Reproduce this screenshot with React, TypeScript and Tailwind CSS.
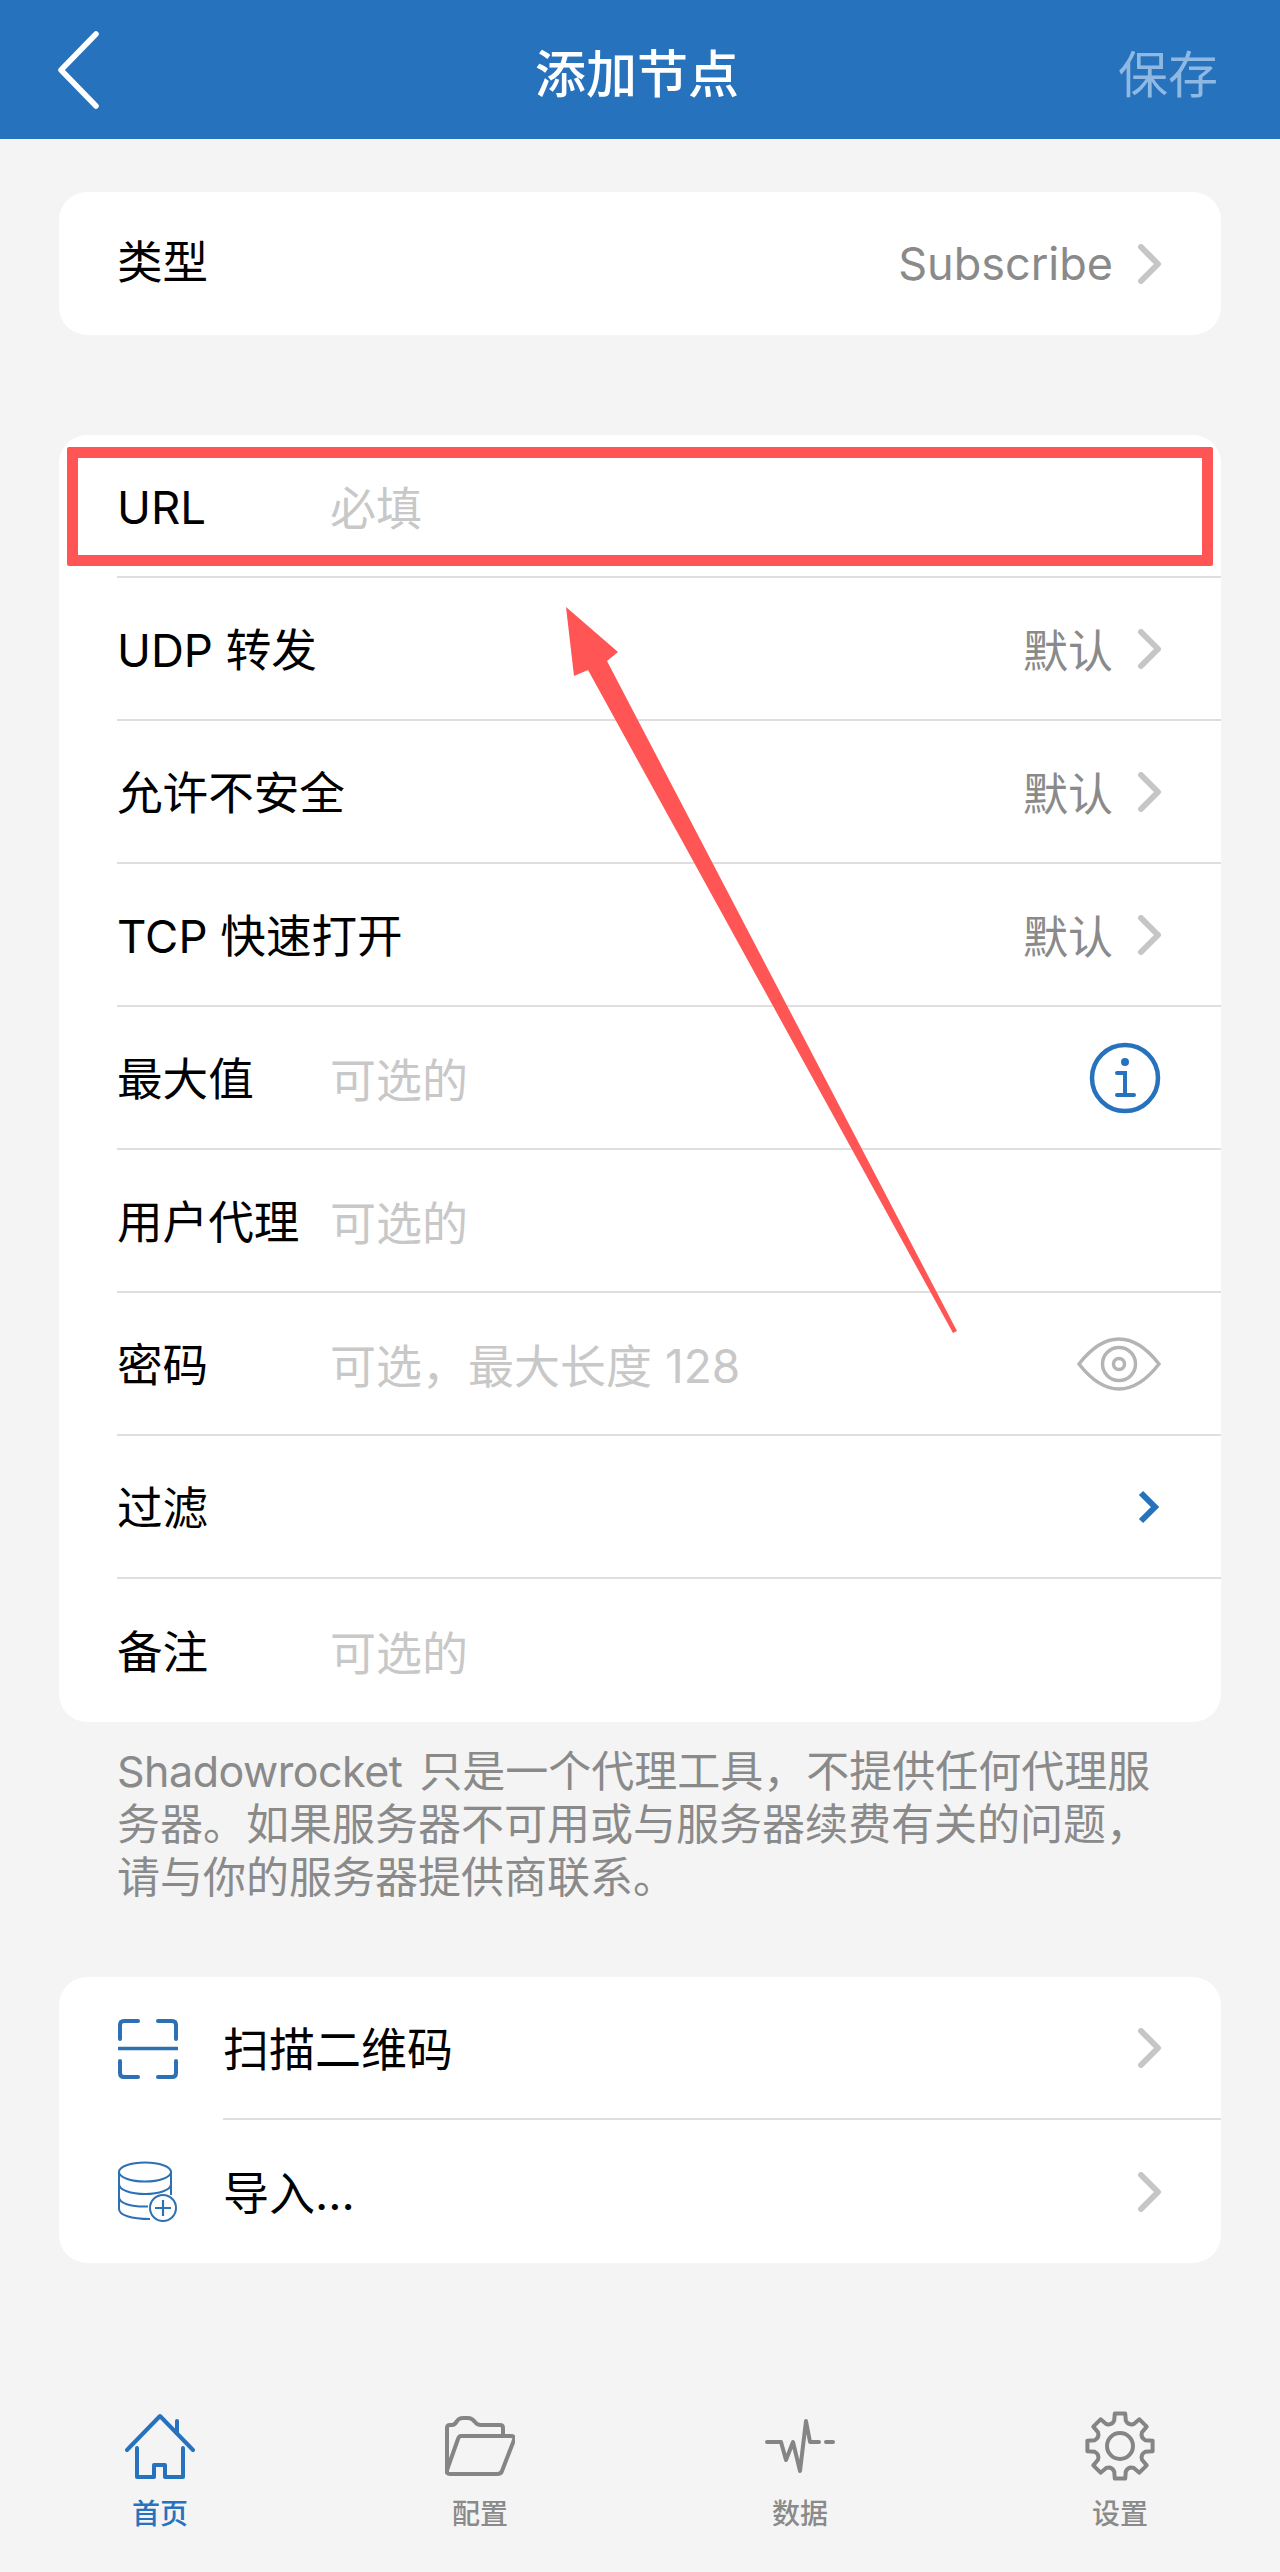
import type { ReactNode } from "react";

const font = "font-['Inter','Noto_Sans_CJK_SC',sans-serif]";

function Chevron({ blue }: { blue?: boolean }) {
  if (blue) {
    return (
      <svg width="26" height="36" viewBox="0 0 26 36" className="mr-[1px] shrink-0" fill="none">
        <path d="M5 4 L19 18 L5 32" stroke="#2672bd" strokeWidth="6" strokeLinejoin="miter" />
      </svg>
    );
  }
  return (
    <svg width="26" height="40" viewBox="0 0 26 40" className="shrink-0" fill="none">
      <path d="M4 3 L21 20 L4 37" stroke="#c6c6c6" strokeWidth="6" strokeLinecap="round" strokeLinejoin="round" />
    </svg>
  );
}

function Row({
  label,
  placeholder,
  value,
  link,
  right,
  last,
  flat,
}: {
  label: string;
  placeholder?: string;
  value?: string;
  link?: "gray" | "blue";
  right?: ReactNode;
  last?: boolean;
  flat?: boolean;
}) {
  const nudge = flat ? "" : "pt-[6px]";
  return (
    <div className={`flex h-[143px] items-center pr-[58px] ${last ? "" : "border-b-2 border-[#dedede]"}`}>
      <div className={`w-[213px] shrink-0 text-[45.6px] whitespace-nowrap text-black ${nudge}`}>{label}</div>
      {placeholder && <div className={`text-[46px] text-[#c8c8c8] ${nudge}`}>{placeholder}</div>}
      <div className="ml-auto flex items-center gap-[24px]">
        {value && <span className={`text-[45px] text-[#8a8a8a] ${nudge}`}>{value}</span>}
        {link && <Chevron blue={link === "blue"} />}
        {right}
      </div>
    </div>
  );
}

function InfoIcon() {
  return (
    <svg width="72" height="72" viewBox="0 0 72 72" fill="none" stroke="#2672bd" className="mr-[2px]">
      <circle cx="36" cy="36" r="33" strokeWidth="4.5" />
      <circle cx="36" cy="20" r="4" fill="#2672bd" stroke="none" />
      <path d="M28 31 H36 V52 M28 53 H45" strokeWidth="4" strokeLinecap="round" />
    </svg>
  );
}

function EyeIcon() {
  return (
    <svg width="84" height="54" viewBox="0 0 84 54" fill="none" stroke="#b4b4b4" strokeWidth="3.5" className="mr-[2px]">
      <path d="M2 27 C16 9 30 2 42 2 C54 2 68 9 82 27 C68 45 54 52 42 52 C30 52 16 45 2 27 Z" />
      <circle cx="42" cy="27" r="16.5" />
      <circle cx="42" cy="27" r="5.5" />
    </svg>
  );
}

function ScanIcon() {
  return (
    <svg width="60" height="60" viewBox="0 0 60 60" fill="none" stroke="#2d71b4" strokeWidth="4" strokeLinecap="round">
      <path d="M20 2 H6 Q2 2 2 6 V20" />
      <path d="M40 2 H54 Q58 2 58 6 V20" />
      <path d="M1 29.5 H59" strokeWidth="3.5" />
      <path d="M2 42 V54 Q2 58 6 58 H20" />
      <path d="M58 42 V54 Q58 58 54 58 H40" />
    </svg>
  );
}

function DbIcon() {
  return (
    <svg width="60" height="62" viewBox="0 0 60 62" fill="none" stroke="#2d71b4" strokeWidth="2">
      <ellipse cx="27" cy="11" rx="26" ry="9.5" />
      <path d="M1 11 V48 C1 54 13 58 32 58" />
      <path d="M53 11 V34" />
      <path d="M1 23 C1 29 13 33 27 33 C41 33 53 29 53 23" />
      <path d="M1 36 C1 42 12 46 30 45.5" />
      <circle cx="45" cy="47" r="13" fill="#fff" />
      <path d="M45 39 V55 M37 47 H53" strokeWidth="2.2" />
    </svg>
  );
}

function HomeIcon() {
  return (
    <svg width="70" height="66" viewBox="0 0 70 66" fill="none" stroke="#2672bd" strokeWidth="4" strokeLinejoin="round" strokeLinecap="round">
      <path d="M2 37 L35 3 L68 37" />
      <path d="M52 20 V8" />
      <path d="M12 35 V64 H29 V52 H40 V64 H58 V35" />
    </svg>
  );
}

function FolderIcon() {
  return (
    <svg width="70" height="60" viewBox="0 0 70 60" fill="none" stroke="#858585" strokeWidth="4" strokeLinejoin="round">
      <path d="M2 56 V12 Q2 9 5 9 H7 Q10 9 12 5 Q14 2 18 2 H23 Q27 2 30 6 Q32 9 36 9 H55 Q58 9 58 12 V20" />
      <path d="M16 20 H66 Q70 20 69 24 L57 55 Q56 58 52 58 H5 Q1 58 2 54 L13 23 Q14 20 16 20 Z" />
    </svg>
  );
}

function PulseIcon() {
  return (
    <svg width="70" height="56" viewBox="0 0 70 56" fill="none" stroke="#858585" strokeWidth="4" strokeLinejoin="round" strokeLinecap="round">
      <path d="M2 24 H16 L21 42 L28 24 L35 53 L41 3 L45 24 H54" />
      <path d="M61 24 H68" />
    </svg>
  );
}

function gearPath() {
  const cx = 35;
  const cy = 35;
  const outer = 33;
  const inner = 25;
  const pt = (r: number, deg: number) => {
    const a = (deg * Math.PI) / 180;
    return `${(cx + r * Math.cos(a)).toFixed(1)} ${(cy + r * Math.sin(a)).toFixed(1)}`;
  };
  let d = "";
  for (let i = 0; i < 8; i++) {
    const a = i * 45;
    d += `${i === 0 ? "M" : "L"}${pt(inner + 1, a - 13)} L${pt(outer, a - 9)} L${pt(outer, a + 9)} L${pt(inner + 1, a + 13)} `;
    d += `Q${pt(inner - 3, a + 22.5)} ${pt(inner + 1, a + 32)} `;
  }
  return d + "Z";
}

function GearIcon() {
  return (
    <svg width="70" height="70" viewBox="0 0 70 70" fill="none" stroke="#858585" strokeWidth="4" strokeLinejoin="round">
      <path d={gearPath()} />
      <circle cx="35" cy="35" r="13" />
    </svg>
  );
}

function Tab({ icon, label, active }: { icon: ReactNode; label: string; active?: boolean }) {
  return (
    <div className="flex flex-col items-center">
      <div className="flex h-[72px] items-center justify-center">{icon}</div>
      <div className={`mt-[14px] text-[28px] leading-[36px] font-medium ${active ? "text-[#2672bd]" : "text-[#8a8a8a]"}`}>{label}</div>
    </div>
  );
}

export default function App() {
  return (
    <div className={`${font} relative h-[2572px] w-[1280px] overflow-hidden bg-[#f4f4f4]`}>
      {/* header */}
      <div className="flex h-[139px] items-center bg-[#2672bd] pr-[62px] pl-[56px]">
        <div className="w-[100px]">
          <svg width="44" height="78" viewBox="0 0 44 78" fill="none">
            <path d="M40 3 L5 39 L40 75" stroke="#fff" strokeWidth="5.5" strokeLinecap="round" strokeLinejoin="round" />
          </svg>
        </div>
        <div className="flex-1 pt-[12px] text-center text-[51px] font-medium text-white">添加节点</div>
        <div className="w-[100px] pt-[12px] text-right text-[50px] text-[#8fb9e3]">保存</div>
      </div>

      <div className="mx-[59px] mt-[53px] rounded-[28px] bg-white pl-[58px]">
        <Row label="类型" value="Subscribe" link="gray" last flat />
      </div>

      <div className="mx-[59px] mt-[100px] rounded-[28px] bg-white pl-[58px]">
        <Row label="URL" placeholder="必填" />
        <Row label="UDP 转发" value="默认" link="gray" />
        <Row label="允许不安全" value="默认" link="gray" />
        <Row label="TCP 快速打开" value="默认" link="gray" />
        <Row label="最大值" placeholder="可选的" right={<InfoIcon />} />
        <Row label="用户代理" placeholder="可选的" />
        <Row label="密码" placeholder="可选，最大长度 128" right={<EyeIcon />} />
        <Row label="过滤" link="blue" />
        <Row label="备注" placeholder="可选的" last />
      </div>

      <p className="mt-[23px] mr-[90px] ml-[117px] text-[43px] leading-[53px] text-[#8a8a8a]">
        <span className="mr-[5px] tracking-[-0.5px]">Shadowrocket</span> 只是一个代理工具，不提供任何代理服务器。如果服务器不可用或与服务器续费有关的问题，请与你的服务器提供商联系。
      </p>

      <div className="mx-[59px] mt-[73px] rounded-[28px] bg-white">
        <div className="flex h-[143px] items-center pl-[59px]">
          <ScanIcon />
          <div className="ml-[45px] flex h-full flex-1 items-center border-b-2 border-[#dedede] pr-[58px] text-[46px] text-black">
            <span className="pt-[4px]">扫描二维码</span>
            <span className="ml-auto"><Chevron /></span>
          </div>
        </div>
        <div className="flex h-[143px] items-center pl-[59px]">
          <DbIcon />
          <div className="ml-[45px] flex h-full flex-1 items-center pr-[58px] text-[46px] text-black">
            <span className="pt-[4px]">导入...</span>
            <span className="ml-auto"><Chevron /></span>
          </div>
        </div>
      </div>

      {/* tab bar */}
      <div className="mt-[147px] grid grid-cols-4">
        <Tab icon={<HomeIcon />} label="首页" active />
        <Tab icon={<FolderIcon />} label="配置" />
        <Tab icon={<PulseIcon />} label="数据" />
        <Tab icon={<GearIcon />} label="设置" />
      </div>

      {/* annotation drawn on top of the screenshot */}
      <div className="absolute top-[447px] left-[67px] h-[119px] w-[1146px] rounded-[2px] border-[11px] border-[#ff5555]" />
      <svg className="absolute top-0 left-0" width="1280" height="1400" viewBox="0 0 1280 1400" fill="#ff5555">
        <polygon points="566,607 618,652 607,661 957,1331 953,1333 588,670 574,676" />
      </svg>
    </div>
  );
}
